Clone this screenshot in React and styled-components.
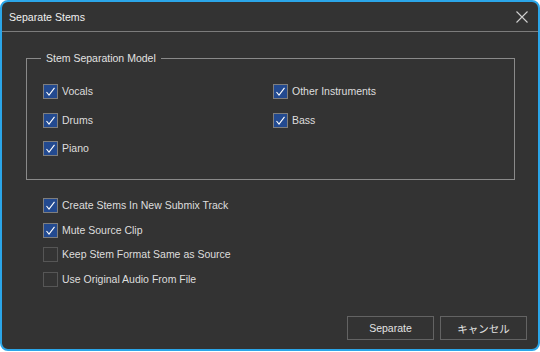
import React from "react";
import styled, { createGlobalStyle } from "styled-components";

const Global = createGlobalStyle`
  html, body { margin: 0; padding: 0; background: #ffffff; }
  #root { width: 540px; height: 352px; }
`;

const Window = styled.div`
  box-sizing: border-box;
  width: 540px;
  height: 351px;
  border: 2px solid #2ba6e9;
  border-radius: 8px;
  background: #333333;
  display: flex;
  flex-direction: column;
  overflow: hidden;
  font-family: "Liberation Sans", Arial, sans-serif;
  font-size: 10.5px;
  color: #dedede;
`;

const TitleBar = styled.div`
  height: 29px;
  border-bottom: 1px solid #7c7c7c;
  display: flex;
  align-items: center;
  justify-content: space-between;
  padding: 0 10px 0 7px;
  flex-shrink: 0;
`;

const Title = styled.span`
  font-size: 10.6px;
  color: #f0f0f0;
`;

const CloseButton = styled.button`
  width: 12px;
  height: 12px;
  padding: 0;
  border: 0;
  background: transparent;
  display: flex;
  margin-top: 1px;
  svg { display: block; }
`;

const Body = styled.div`
  padding: 19px 23px 0 24px;
  display: flex;
  flex-direction: column;
  flex: 1;
`;

const Group = styled.fieldset`
  margin: 0;
  padding: 19px 0 23px 0;
  border: 1px solid #8a8a8a;
  min-width: 0;
`;

const Legend = styled.legend`
  margin-left: 14px;
  padding: 0 5px;
  line-height: 14px;
  color: #e2e2e2;
`;

const ModelGrid = styled.div`
  display: grid;
  grid-template-columns: 230px 1fr;
  row-gap: 13.5px;
  padding-left: 16px;
`;

const Options = styled.div`
  margin-top: 18px;
  padding-left: 17px;
  display: flex;
  flex-direction: column;
  gap: 9.7px;
`;

const Row = styled.label`
  display: flex;
  align-items: center;
  gap: 4px;
  height: 15px;
  line-height: 15px;
  white-space: nowrap;
`;

const Box = styled.span`
  box-sizing: border-box;
  width: 15px;
  height: 15px;
  flex-shrink: 0;
  border: 1px solid ${(p) => (p.$checked ? "#7e7e7e" : "#565656")};
  background: ${(p) => (p.$checked ? "#234a90" : "#343434")};
  display: flex;
  svg { display: block; }
`;

const Footer = styled.div`
  margin-top: auto;
  display: flex;
  justify-content: flex-end;
  gap: 6px;
  padding: 0 11px 9px 0;
`;

const Button = styled.button`
  box-sizing: border-box;
  width: 87px;
  height: 24px;
  border: 1px solid #636363;
  background: #333333;
  color: #e2e2e2;
  font-family: "Liberation Sans", "Noto Sans CJK JP", Arial, sans-serif;
  font-size: 10.5px;
  padding: 0;
`;

function Check({ checked, label }) {
  return (
    <Row>
      <Box $checked={checked}>
        {checked && (
          <svg width="13" height="13" viewBox="0 0 13 13">
            <path d="M2.5 7 L5 10 L10.5 2.8" fill="none" stroke="#ffffff" strokeWidth="1.1" />
          </svg>
        )}
      </Box>
      <span>{label}</span>
    </Row>
  );
}

export default function App() {
  return (
    <>
      <Global />
      <Window>
        <TitleBar>
          <Title>Separate Stems</Title>
          <CloseButton aria-label="close">
            <svg width="12" height="12" viewBox="0 0 12 12">
              <path d="M0.5 0.5 L11.5 11.5 M11.5 0.5 L0.5 11.5" stroke="#cfcfcf" strokeWidth="1.1" fill="none" />
            </svg>
          </CloseButton>
        </TitleBar>
        <Body>
          <Group>
            <Legend>Stem Separation Model</Legend>
            <ModelGrid>
              <Check checked label="Vocals" />
              <Check checked label="Other Instruments" />
              <Check checked label="Drums" />
              <Check checked label="Bass" />
              <Check checked label="Piano" />
            </ModelGrid>
          </Group>
          <Options>
            <Check checked label="Create Stems In New Submix Track" />
            <Check checked label="Mute Source Clip" />
            <Check label="Keep Stem Format Same as Source" />
            <Check label="Use Original Audio From File" />
          </Options>
        </Body>
        <Footer>
          <Button>Separate</Button>
          <Button>キャンセル</Button>
        </Footer>
      </Window>
    </>
  );
}
